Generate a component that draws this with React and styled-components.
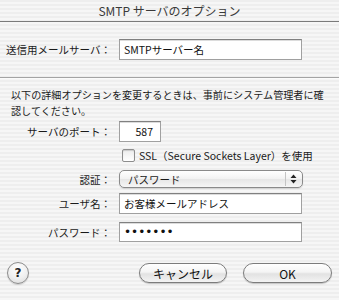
import React from 'react'
import styled, { createGlobalStyle } from 'styled-components'

const Global = createGlobalStyle`
  html, body { margin: 0; padding: 0; }
  body {
    width: 339px;
    height: 300px;
    overflow: hidden;
    font-family: "Noto Sans CJK JP", "DejaVu Sans", sans-serif;
    color: #1a1a1a;
  }
`

const stripes = `repeating-linear-gradient(to bottom, #eeeeee 0px, #eeeeee 2px, #f6f6f6 2px, #f6f6f6 4px)`

const Dialog = styled.div`
  width: 339px;
  height: 300px;
  background: ${stripes};
  display: flex;
  flex-direction: column;
`

const TitleBar = styled.div`
  height: 21px;
  border-bottom: 1px solid #7a7a7a;
  display: flex;
  align-items: center;
  justify-content: center;
  font-size: 12px;
  color: #3a3a3a;
`

const Section = styled.div`
  padding: ${p => p.$pad || '0'};
  display: flex;
  flex-direction: column;
`

const Divider = styled.div`
  height: 1px;
  background: #a4a4a4;
  border-bottom: 1px solid #fbfbfb;
`

const Row = styled.div`
  display: flex;
  align-items: center;
  height: ${p => p.$h || 21}px;
  margin-top: ${p => p.$mt || 0}px;
`

const Label = styled.div`
  width: 119px;
  padding-right: 8px;
  box-sizing: border-box;
  text-align: right;
  font-size: 10.5px;
  white-space: nowrap;
`

const Field = styled.div`
  width: ${p => p.$w || 183}px;
  height: ${p => p.$h || 21}px;
  box-sizing: border-box;
  background: #fff;
  border: 1px solid #a0a0a0;
  border-top-color: #808080;
  box-shadow: inset 0 1px 0 #dcdcdc;
  display: flex;
  align-items: center;
  justify-content: ${p => (p.$right ? 'flex-end' : 'flex-start')};
  padding: 0 7px 0 4px;
  font-size: 10.5px;
  color: #111;
  white-space: nowrap;
`

const Dots = styled.span`
  font-family: "DejaVu Sans", sans-serif;
  font-size: 12px;
  color: #111;
`

const Note = styled.div`
  padding: 8px 8px 0 11px;
  font-size: 10.1px;
  line-height: 16px;
  white-space: nowrap;
`

const CheckRow = styled.div`
  display: flex;
  align-items: center;
  gap: 4px;
  padding-left: 122px;
  height: 22px;
  margin-top: 2px;
  font-size: 10.5px;
`

const Box = styled.span`
  width: 13px;
  height: 13px;
  box-sizing: border-box;
  border: 1px solid #8d8d8d;
  border-radius: 2px;
  background: linear-gradient(to bottom, #ececec, #ffffff);
  box-shadow: inset 0 1px 1px rgba(0, 0, 0, 0.15);
`

const Popup = styled.div`
  width: 184px;
  height: 18px;
  box-sizing: border-box;
  border: 1px solid #8a8a8a;
  border-radius: 5px;
  background: linear-gradient(to bottom, #ffffff 0%, #f2f2f2 50%, #e6e6e6 51%, #f6f6f6 100%);
  box-shadow: 0 1px 1px rgba(0, 0, 0, 0.12);
  display: flex;
  align-items: center;
  justify-content: space-between;
  padding: 0 2px 0 8px;
  font-size: 10.5px;
`

const Stepper = styled.span`
  width: 14px;
  height: 14px;
  border-left: 1px solid #c4c4c4;
  display: flex;
  align-items: center;
  justify-content: center;
`

const Footer = styled.div`
  display: flex;
  align-items: center;
  padding: 20px 7px 0 7px;
`

const Help = styled.div`
  width: 22px;
  height: 22px;
  box-sizing: border-box;
  border-radius: 50%;
  border: 1px solid #8c8c8c;
  background: radial-gradient(circle at 50% 30%, #ffffff 0%, #efefef 55%, #d8d8d8 100%);
  box-shadow: 0 1px 1px rgba(0, 0, 0, 0.15);
  display: flex;
  align-items: center;
  justify-content: center;
  font-family: "DejaVu Sans", sans-serif;
  font-weight: bold;
  font-size: 12px;
  color: #222;
`

const Buttons = styled.div`
  margin-left: auto;
  display: flex;
  gap: 16px;
`

const Button = styled.div`
  width: ${p => p.$w}px;
  height: 20px;
  box-sizing: border-box;
  border: 1px solid #7c7c7c;
  border-radius: 10px;
  background: linear-gradient(to bottom, #ffffff 0%, #f4f4f4 45%, #e2e2e2 55%, #f3f3f3 100%);
  box-shadow: 0 1px 1px rgba(0, 0, 0, 0.2);
  display: flex;
  align-items: center;
  justify-content: center;
  font-size: 12px;
  color: #111;
`

export default function App() {
  return (
    <>
      <Global />
      <Dialog>
        <TitleBar>SMTP サーバのオプション</TitleBar>
        <Section $pad="17px 0 17px 0">
          <Row>
            <Label>送信用メールサーバ：</Label>
            <Field>SMTPサーバー名</Field>
          </Row>
        </Section>
        <Divider />
        <Note>
          以下の詳細オプションを変更するときは、事前にシステム管理者に確
          <br />
          認してください。
        </Note>
        <Section $pad="2px 0 0 0">
          <Row>
            <Label>サーバのポート：</Label>
            <Field $w={42} $right>587</Field>
          </Row>
          <CheckRow>
            <Box />
            <span>SSL（Secure Sockets Layer）を使用</span>
          </CheckRow>
          <Row $h={18} $mt={4}>
            <Label>認証：</Label>
            <Popup>
              <span>パスワード</span>
              <Stepper>
                <svg width="7" height="10" viewBox="0 0 7 10">
                  <path d="M3.5 0.5 L6.5 4 L0.5 4 Z M3.5 9.5 L6.5 6 L0.5 6 Z" fill="#222" />
                </svg>
              </Stepper>
            </Popup>
          </Row>
          <Row $mt={5}>
            <Label>ユーザ名：</Label>
            <Field>お客様メールアドレス</Field>
          </Row>
          <Row $h={20} $mt={8}>
            <Label>パスワード：</Label>
            <Field $h={20}><Dots>•••••••</Dots></Field>
          </Row>
        </Section>
        <Footer>
          <Help>?</Help>
          <Buttons>
            <Button $w={88}>キャンセル</Button>
            <Button $w={89}>OK</Button>
          </Buttons>
        </Footer>
      </Dialog>
    </>
  )
}
